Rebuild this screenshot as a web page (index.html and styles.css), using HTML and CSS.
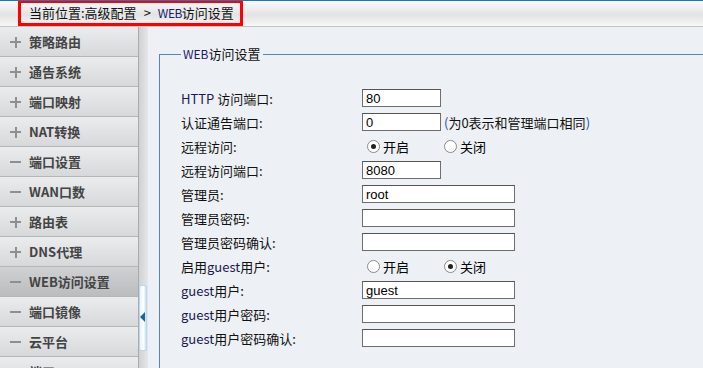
FILE: index.html
```html
<!DOCTYPE html>
<html lang="zh-CN">
<head>
  <meta charset="UTF-8">
  <title>WEB访问设置</title>
  <link rel="stylesheet" href="styles.css">
</head>
<body>
  <div class="topline"></div>
  <div class="header">
    <div class="crumb">当前位置:高级配置<span class="gt">&gt;</span><span class="latin">WEB</span>访问设置</div>
  </div>

  <div class="main">
    <!-- left menu -->
    <ul class="menu">
      <li class="menu-item"><span class="sign plus"></span>策略路由</li>
      <li class="menu-item"><span class="sign plus"></span>通告系统</li>
      <li class="menu-item"><span class="sign plus"></span>端口映射</li>
      <li class="menu-item"><span class="sign plus"></span>NAT转换</li>
      <li class="menu-item"><span class="sign"></span>端口设置</li>
      <li class="menu-item"><span class="sign"></span>WAN口数</li>
      <li class="menu-item"><span class="sign plus"></span>路由表</li>
      <li class="menu-item"><span class="sign plus"></span>DNS代理</li>
      <li class="menu-item active"><span class="sign"></span>WEB访问设置</li>
      <li class="menu-item"><span class="sign"></span>端口镜像</li>
      <li class="menu-item"><span class="sign"></span>云平台</li>
      <li class="menu-item"><span class="sign"></span>端口</li>
    </ul>

    <!-- splitter with collapse handle -->
    <div class="splitter">
      <div class="handle"><span class="arrow"></span></div>
    </div>

    <div class="content">
      <fieldset class="box">
        <legend><span class="latin">WEB</span>访问设置</legend>
        <div class="form">
          <div class="row">
            <label class="lbl"><span class="latin">HTTP</span> 访问端口:</label>
            <div class="field"><input class="txt short" type="text" value="80"></div>
          </div>
          <div class="row">
            <label class="lbl">认证通告端口:</label>
            <div class="field"><input class="txt short" type="text" value="0"><span class="hint"><span class="paren">(</span>为0表示和管理端口相同<span class="paren">)</span></span></div>
          </div>
          <div class="row">
            <label class="lbl">远程访问:</label>
            <div class="field">
              <span class="radio on"></span><span class="opt">开启</span>
              <span class="radio"></span><span class="opt">关闭</span>
            </div>
          </div>
          <div class="row">
            <label class="lbl">远程访问端口:</label>
            <div class="field"><input class="txt short" type="text" value="8080"></div>
          </div>
          <div class="row">
            <label class="lbl">管理员:</label>
            <div class="field"><input class="txt" type="text" value="root"></div>
          </div>
          <div class="row">
            <label class="lbl">管理员密码:</label>
            <div class="field"><input class="txt" type="password"></div>
          </div>
          <div class="row">
            <label class="lbl">管理员密码确认:</label>
            <div class="field"><input class="txt" type="password"></div>
          </div>
          <div class="row">
            <label class="lbl">启用<span class="latin">guest</span>用户:</label>
            <div class="field">
              <span class="radio"></span><span class="opt">开启</span>
              <span class="radio on"></span><span class="opt">关闭</span>
            </div>
          </div>
          <div class="row">
            <label class="lbl"><span class="latin">guest</span>用户:</label>
            <div class="field"><input class="txt" type="text" value="guest"></div>
          </div>
          <div class="row">
            <label class="lbl"><span class="latin">guest</span>用户密码:</label>
            <div class="field"><input class="txt" type="password"></div>
          </div>
          <div class="row">
            <label class="lbl"><span class="latin">guest</span>用户密码确认:</label>
            <div class="field"><input class="txt" type="password"></div>
          </div>
        </div>
      </fieldset>
    </div>
  </div>
</body>
</html>
```

FILE: styles.css
```css
html, body {
  height: 368px;
  overflow: hidden;
}
body {
  margin: 0;
  font-family: "Noto Sans CJK SC", "DejaVu Sans", sans-serif;
  font-size: 13px;
  color: #000;
  background: #edf0f4;
}
.topline {
  height: 1px;
  background: #1b74c6;
}
.header {
  height: 25px;
  background: linear-gradient(#fafafa, #e3e3e3 55%, #f7f7f7);
  border-bottom: 1px solid #c4c4c4;
  padding-left: 18px;
}
.crumb {
  display: inline-block;
  box-sizing: border-box;
  height: 25px;
  border: 3px solid #f00;
  border-top-width: 2px;
  padding: 0 6px 0 8px;
  font-size: 13px;
  line-height: 19px;
  color: #111;
  white-space: nowrap;
}
.crumb .gt {
  display: inline-block;
  margin: 0 7px;
}
.crumb .latin {
  color: #1a1a6e;
  font-size: 12px;
  letter-spacing: -0.5px;
}
.main {
  display: flex;
  height: 341px;
  overflow: hidden;
}
.menu {
  list-style: none;
  margin: 0;
  padding: 0;
  width: 138px;
  flex: none;
}
.menu-item {
  display: flex;
  align-items: center;
  height: 29px;
  border-bottom: 1px solid #b4b6b8;
  background: linear-gradient(#ebecee, #d6d8da);
  font-weight: bold;
  color: #444;
  white-space: nowrap;
}
.menu-item.active {
  background: linear-gradient(#cfd1d3, #babcbe);
}
.sign {
  position: relative;
  width: 11px;
  height: 2px;
  margin: 1px 8px 0 10px;
  background: #8f8f8f;
}
.sign.plus::after {
  content: "";
  position: absolute;
  left: 4.5px;
  top: -4.5px;
  width: 2px;
  height: 11px;
  background: #8f8f8f;
}
.splitter {
  position: relative;
  width: 9px;
  flex: none;
  border-left: 1px solid #a8aaac;
  background: linear-gradient(to right, #cfd1d3, #e4e6e8);
}
.handle {
  position: absolute;
  left: 0;
  top: 258px;
  width: 6px;
  height: 64px;
  background: linear-gradient(to right, #e9f4fb, #fff 60%, #c6dff0);
  border: 1px solid #bcd6ea;
  border-radius: 2px;
}
.arrow {
  position: absolute;
  left: 0;
  top: 26px;
  border-style: solid;
  border-width: 5px 5px 5px 0;
  border-color: transparent #1167a8 transparent transparent;
}
.content {
  flex: 1;
  padding: 20px 0 0 11px;
  min-width: 0;
  overflow: hidden;
}
.box {
  margin: 0 -20px 0 0;
  height: 340px;
  border: 1px solid #5b84b5;
  border-right: 0;
  padding: 0 0 0 21px;
}
legend {
  padding: 0 2px;
  font-size: 13px;
  line-height: 14px;
  color: #111;
}
legend .latin {
  color: #1a1a6e;
  font-size: 12px;
}
.form {
  padding-top: 25px;
}
.row {
  display: flex;
  align-items: center;
  height: 24px;
}
.lbl {
  width: 181px;
  flex: none;
  color: #111;
}
.lbl .latin { color: #1a1a50; }
.field {
  display: flex;
  align-items: center;
}
.txt {
  box-sizing: border-box;
  width: 153px;
  height: 18px;
  margin: 0;
  padding: 0 3px;
  border: 1px solid #6e6e6e;
  border-top-color: #555;
  background: #fff;
  font-family: "Liberation Sans", Arial, sans-serif;
  font-size: 13px;
  color: #000;
}
.txt.short { width: 79px; }
.hint {
  margin-left: 3px;
  color: #111;
}
.paren { color: #2b4ea8; }
.radio {
  box-sizing: border-box;
  width: 13px;
  height: 13px;
  margin: 0 3px 0 5px;
  border: 1px solid #8b8b8b;
  border-radius: 50%;
  background: #fff;
  position: relative;
}
.radio.on::after {
  content: "";
  position: absolute;
  left: 3px;
  top: 3px;
  width: 5px;
  height: 5px;
  border-radius: 50%;
  background: #222;
}
.opt {
  width: 56px;
}
```
